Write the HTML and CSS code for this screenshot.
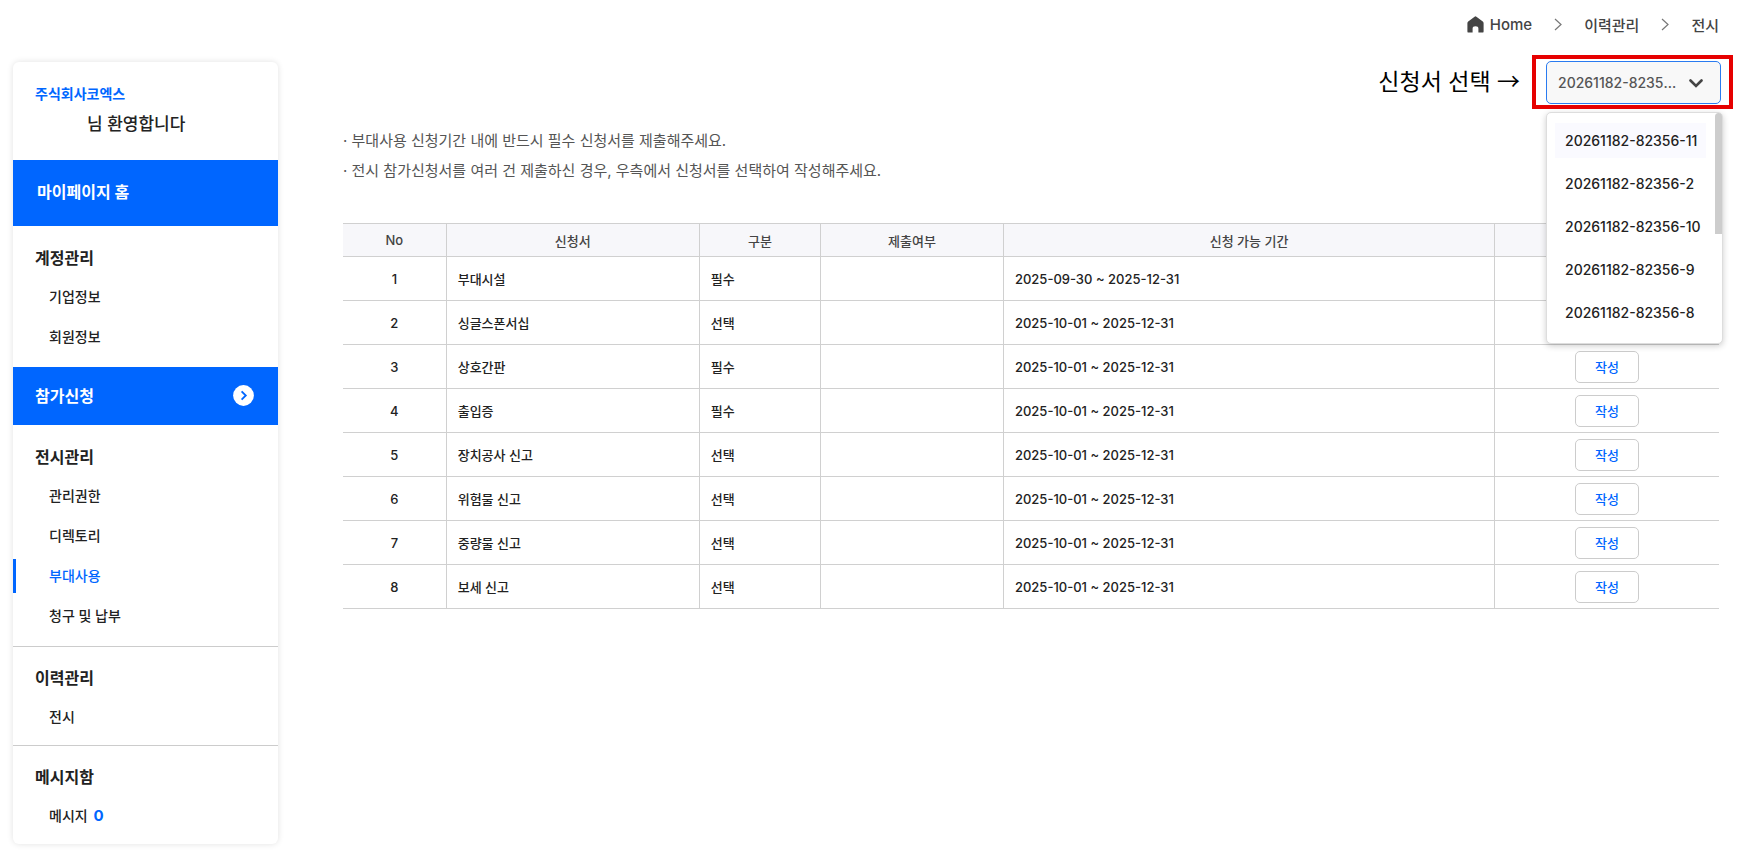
FILE: index.html
```
<!DOCTYPE html>
<html lang="ko">
<head>
  <meta charset="UTF-8">
  <meta name="viewport" content="width=device-width, initial-scale=1.0">
  <title>마이페이지 - 부대사용</title>
  <link rel="stylesheet" href="styles.css">
</head>
<body>
  <header class="top">
    <nav class="breadcrumb" aria-label="breadcrumb">
      <a href="#" class="home">
        <svg width="17" height="17" viewBox="0 0 17 17"><path d="M7.6 0.7 Q8.5 0 9.4 0.7 L15.8 5.6 Q16.6 6.2 16.6 7.2 V15.4 Q16.6 16.6 15.4 16.6 H11.4 V12.6 Q11.4 10.2 8.5 10.2 Q5.6 10.2 5.6 12.6 V16.6 H1.6 Q0.4 16.6 0.4 15.4 V7.2 Q0.4 6.2 1.2 5.6 Z" fill="#444"/></svg>
        Home
      </a>
      <svg class="sep" width="8" height="13" viewBox="0 0 8 13"><path d="M1 1 L7 6.5 L1 12" fill="none" stroke="#777" stroke-width="1.2"/></svg>
      <a href="#">이력관리</a>
      <svg class="sep" width="8" height="13" viewBox="0 0 8 13"><path d="M1 1 L7 6.5 L1 12" fill="none" stroke="#777" stroke-width="1.2"/></svg>
      <a href="#">전시</a>
    </nav>
  </header>

  <div class="layout">
    <!-- 사이드 메뉴 -->
    <aside class="sidebar">
      <div class="welcome">
        <p class="company">주식회사코엑스</p>
        <p class="greeting">님 환영합니다</p>
      </div>
      <a href="#" class="mypage-home">마이페이지 홈</a>
      <section class="menu">
        <h2>계정관리</h2>
        <ul>
          <li><a href="#">기업정보</a></li>
          <li><a href="#">회원정보</a></li>
        </ul>
      </section>
      <a href="#" class="apply">
        참가신청
        <svg width="21" height="21" viewBox="0 0 21 21"><circle cx="10.5" cy="10.5" r="10.4" fill="#fff"/><path d="M8.6 6.3 L12.8 10.5 L8.6 14.7" fill="none" stroke="#0066ff" stroke-width="1.8"/></svg>
      </a>
      <section class="menu">
        <h2>전시관리</h2>
        <ul>
          <li><a href="#">관리권한</a></li>
          <li><a href="#">디렉토리</a></li>
          <li><a href="#" class="active">부대사용</a></li>
          <li><a href="#">청구 및 납부</a></li>
        </ul>
      </section>
      <section class="menu line">
        <h2>이력관리</h2>
        <ul>
          <li><a href="#">전시</a></li>
        </ul>
      </section>
      <section class="menu line">
        <h2>메시지함</h2>
        <ul>
          <li><a href="#">메시지 <b class="count">0</b></a></li>
        </ul>
      </section>
    </aside>

    <main class="content">
      <!-- 신청서 선택 -->
      <div class="picker">
        <label for="application">신청서 선택 →</label>
        <div class="picker-mark">
          <div class="select-box">
            <select id="application">
              <option>20261182-82356-11</option>
              <option>20261182-82356-2</option>
              <option>20261182-82356-10</option>
              <option>20261182-82356-9</option>
              <option>20261182-82356-8</option>
            </select>
            <svg class="arrow" width="14" height="9" viewBox="0 0 14 9"><path d="M1.5 1.5 L7 7 L12.5 1.5" fill="none" stroke="#444" stroke-width="2.6" stroke-linecap="round"/></svg>
            <ul class="options">
              <li><button type="button" class="on">20261182-82356-11</button></li>
              <li><button type="button">20261182-82356-2</button></li>
              <li><button type="button">20261182-82356-10</button></li>
              <li><button type="button">20261182-82356-9</button></li>
              <li><button type="button">20261182-82356-8</button></li>
            </ul>
          </div>
        </div>
      </div>

      <ul class="notice">
        <li>· 부대사용 신청기간 내에 반드시 필수 신청서를 제출해주세요.</li>
        <li>· 전시 참가신청서를 여러 건 제출하신 경우, 우측에서 신청서를 선택하여 작성해주세요.</li>
      </ul>

      <div class="table-wrap">
        <table>
          <colgroup>
            <col class="c-no"><col class="c-name"><col class="c-type"><col class="c-state"><col class="c-date"><col>
          </colgroup>
          <thead>
            <tr><th>No</th><th>신청서</th><th>구분</th><th>제출여부</th><th>신청 가능 기간</th><th></th></tr>
          </thead>
          <tbody>
            <tr><td class="no">1</td><td>부대시설</td><td>필수</td><td></td><td>2025-09-30 ~ 2025-12-31</td><td></td></tr>
            <tr><td class="no">2</td><td>싱글스폰서십</td><td>선택</td><td></td><td>2025-10-01 ~ 2025-12-31</td><td></td></tr>
            <tr><td class="no">3</td><td>상호간판</td><td>필수</td><td></td><td>2025-10-01 ~ 2025-12-31</td><td class="act"><button type="button">작성</button></td></tr>
            <tr><td class="no">4</td><td>출입증</td><td>필수</td><td></td><td>2025-10-01 ~ 2025-12-31</td><td class="act"><button type="button">작성</button></td></tr>
            <tr><td class="no">5</td><td>장치공사 신고</td><td>선택</td><td></td><td>2025-10-01 ~ 2025-12-31</td><td class="act"><button type="button">작성</button></td></tr>
            <tr><td class="no">6</td><td>위험물 신고</td><td>선택</td><td></td><td>2025-10-01 ~ 2025-12-31</td><td class="act"><button type="button">작성</button></td></tr>
            <tr><td class="no">7</td><td>중량물 신고</td><td>선택</td><td></td><td>2025-10-01 ~ 2025-12-31</td><td class="act"><button type="button">작성</button></td></tr>
            <tr><td class="no">8</td><td>보세 신고</td><td>선택</td><td></td><td>2025-10-01 ~ 2025-12-31</td><td class="act"><button type="button">작성</button></td></tr>
          </tbody>
        </table>
      </div>
    </main>
  </div>
</body>
</html>
```
FILE: styles.css
```
* {
  box-sizing: border-box;
}
body {
  margin: 0;
  background: #fff;
  color: #222;
  font-family: Inter, "Noto Sans CJK KR", sans-serif;
  font-size: 14px;
  font-weight: 500;
}
ul, p, h2 {
  margin: 0;
  padding: 0;
}
ul {
  list-style: none;
}
a {
  color: inherit;
  text-decoration: none;
}
button, select {
  font-family: inherit;
  font-weight: 500;
}
svg {
  flex: none;
}

/* breadcrumb */
.top {
  padding: 12px 21px 0 13px;
}
.breadcrumb {
  display: flex;
  justify-content: flex-end;
  align-items: center;
  gap: 22px;
  height: 24px;
  font-size: 15px;
  color: #444;
}
.home {
  display: flex;
  align-items: center;
  gap: 6px;
}

.layout {
  display: flex;
  align-items: flex-start;
  gap: 65px;
  padding: 19px 7px 16px 13px;
}

/* sidebar */
.sidebar {
  flex: none;
  width: 265px;
  margin-top: 7px;
  border-radius: 6px;
  box-shadow: 0 0 6px rgba(0, 0, 0, 0.12);
}
.welcome {
  padding: 20px 22px 24px;
}
.company {
  line-height: 24px;
  font-weight: 700;
  color: #0066ff;
}
.greeting {
  margin-top: 6px;
  padding-left: 52px;
  line-height: 24px;
  font-size: 17px;
}
.mypage-home,
.apply {
  display: flex;
  align-items: center;
  justify-content: space-between;
  background: #0066ff;
  color: #fff;
  font-size: 16px;
  font-weight: 700;
}
.mypage-home {
  height: 66px;
  padding: 0 24px 4px;
}
.apply {
  height: 58px;
  padding: 0 24px 2px 22px;
}
.menu {
  padding: 20px 0 10px;
}
.menu.line {
  padding: 19px 0 8px;
  border-top: 1px solid #ccc;
}
.menu h2 {
  margin-bottom: 7px;
  padding-left: 22px;
  line-height: 24px;
  font-size: 16px;
  font-weight: 700;
}
.menu li {
  padding: 3px 0;
}
.menu a {
  display: block;
  padding-left: 33px;
  border-left: 3px solid transparent;
  line-height: 34px;
}
.menu .active {
  border-left-color: #0066ff;
  color: #0066ff;
}
.count {
  margin-left: 2px;
  font-size: 15px;
  color: #0066ff;
}

/* content */
.content {
  flex: 1;
  min-width: 0;
}
.picker {
  display: flex;
  justify-content: flex-end;
  align-items: center;
  gap: 12px;
}
.picker label {
  padding-bottom: 4px;
  font-size: 23px;
  font-weight: 400;
  font-family: "Noto Sans CJK KR", sans-serif;
  line-height: 32px;
  color: #000;
}
.picker-mark {
  padding: 2px 8px 1px 10px;
  border: 4px solid #e60000;
}
.select-box {
  position: relative;
  width: 175px;
}
.select-box select {
  display: block;
  width: 100%;
  height: 43px;
  padding: 0 42px 0 11px;
  appearance: none;
  border: 1px solid #2a7bf0;
  border-radius: 5px;
  background: #f8f8f8;
  color: #555;
  font-size: 14px;
  text-overflow: ellipsis;
}
.arrow {
  position: absolute;
  top: 18px;
  right: 18px;
  pointer-events: none;
}
.options {
  position: absolute;
  top: 51px;
  left: 0;
  z-index: 2;
  width: 177px;
  height: 232px;
  padding: 6px 8px;
  border: 1px solid #ddd;
  border-radius: 5px;
  background: #fff;
  box-shadow: 0 2px 6px rgba(0, 0, 0, 0.2);
}
/* scroll thumb */
.options::after {
  content: "";
  position: absolute;
  top: 0;
  right: 0;
  width: 7px;
  height: 121px;
  border-radius: 4px 4px 0 0;
  background: #cdcdcd;
}
.options li {
  padding: 4px 8px 4px 0;
}
.options button {
  display: block;
  width: 100%;
  height: 35px;
  padding: 0 10px;
  border: 0;
  background: none;
  color: #222;
  font-size: 14px;
  text-align: left;
  white-space: nowrap;
}
.options .on {
  background: #fafaff;
}
.notice {
  padding: 17px 14px 37px 0;
  font-size: 15px;
  line-height: 30px;
  font-weight: 400;
  color: #555;
}

.table-wrap {
  padding-right: 14px;
}
table {
  width: 100%;
  table-layout: fixed;
  border-collapse: collapse;
  font-size: 13px;
}
.c-no { width: 7.5%; }
.c-name { width: 18.4%; }
.c-type { width: 8.8%; }
.c-state { width: 13.3%; }
.c-date { width: 35.7%; }
th, td {
  padding: 0 11px;
  border: 1px solid #d0d0d0;
}
th:first-child, td:first-child {
  border-left: 0;
}
th:last-child, td:last-child {
  border-right: 0;
}
th {
  height: 33px;
  background: #f7f7fa;
  font-weight: 500;
  color: #444;
}
td {
  height: 44px;
}
.no {
  text-align: center;
}
.act {
  text-align: center;
}
.act button {
  width: 64px;
  height: 32px;
  padding: 0;
  border: 1px solid #ccc;
  border-radius: 5px;
  background: #fff;
  color: #0066ff;
  font-size: 13px;
}
```
